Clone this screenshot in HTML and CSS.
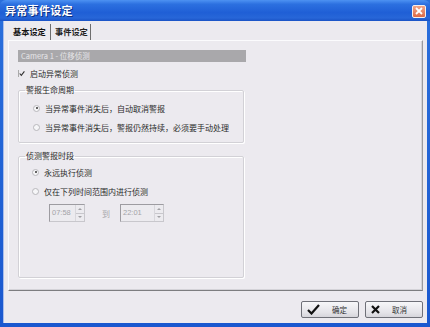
FILE: index.html
```html
<!DOCTYPE html>
<html lang="zh">
<head>
<meta charset="utf-8">
<link rel="stylesheet" href="styles.css">
</head>
<body>
<div class="window">
  <div class="titlebar">
    <span class="title">异常事件设定</span>
    <span class="close"><svg width="8" height="8" viewBox="0 0 8 8"><path d="M1 1L7 7M7 1L1 7" stroke="#fff" stroke-width="1.8"/></svg></span>
  </div>
  <div class="client">
    <div class="tabs">
      <span class="tab active">基本设定</span>
      <span class="tab">事件设定</span>
    </div>
    <div class="panel">
      <div class="graybar">Camera 1 - 位移侦测</div>
      <div class="row check-row">
        <span class="checkbox"><svg width="7" height="7" viewBox="0 0 7 7"><path d="M0.8 3.5L2.7 5.6L6.3 1" fill="none" stroke="#333" stroke-width="1.3"/></svg></span>
        <span>启动异常侦测</span>
      </div>
      <fieldset class="group g1">
        <legend>警报生命周期</legend>
        <div class="group-body">
          <div class="row radio-row"><span class="radio on"></span><span>当异常事件消失后，自动取消警报</span></div>
          <div class="row radio-row"><span class="radio"></span><span>当异常事件消失后，警报仍然持续，必须要手动处理</span></div>
        </div>
      </fieldset>
      <fieldset class="group g2">
        <legend>侦测警报时段</legend>
        <div class="group-body">
          <div class="row radio-row"><span class="radio on"></span><span>永远执行侦测</span></div>
          <div class="row radio-row"><span class="radio"></span><span>仅在下列时间范围内进行侦测</span></div>
          <div class="time-row">
            <div class="spinner s1"><span class="val">07:58</span><span class="arrows"><span class="up"></span><span class="down"></span></span></div>
            <span class="to">到</span>
            <div class="spinner s2"><span class="val">22:01</span><span class="arrows"><span class="up"></span><span class="down"></span></span></div>
          </div>
        </div>
      </fieldset>
    </div>
    <div class="buttons">
      <button class="btn"><svg width="13" height="11" viewBox="0 0 13 11"><path d="M1 6L4.5 9.5L12 1" fill="none" stroke="#111" stroke-width="2.2"/></svg><span>确定</span></button>
      <button class="btn"><svg width="9" height="9" viewBox="0 0 9 9"><path d="M1 1L8 8M8 1L1 8" stroke="#111" stroke-width="2.2"/></svg><span>取消</span></button>
    </div>
  </div>
</div>
</body>
</html>
```
FILE: styles.css
```css
* { box-sizing: border-box; }
html, body { margin: 0; padding: 0; }
body {
  width: 430px;
  height: 327px;
  overflow: hidden;
  font-family: "Noto Sans CJK SC", "Liberation Sans", sans-serif;
  font-size: 8px;
  color: #2a2a2a;
  background: #ECEAEF;
}
.window {
  width: 430px;
  height: 327px;
  display: flex;
  flex-direction: column;
  background: linear-gradient(#2a6fdc, #1a58cf);
  padding: 0 3px 4px 3px;
}
.titlebar {
  height: 21px;
  flex: none;
  display: flex;
  align-items: center;
  justify-content: space-between;
  margin: 0 -3px;
  padding: 0 3px 0 5px;
  background: linear-gradient(#4d92f2 0%, #2c70e0 20%, #1f5fd6 60%, #2766d8 85%, #1a53c6 100%);
  border-radius: 6px 6px 0 0;
}
.title {
  color: #fff;
  font-weight: bold;
  font-size: 11px;
  line-height: 13px;
  letter-spacing: 0.3px;
  text-shadow: 1px 1px 0 #0c2f80;
}
.close {
  width: 14px;
  height: 13px;
  margin-right: 1px;
  margin-top: 1px;
  display: flex;
  align-items: center;
  justify-content: center;
  background: linear-gradient(#f0a487, #dc6a48);
  border: 1px solid #f6f0ee;
  border-radius: 2px;
}
.client {
  flex: 1;
  background: #ECEAEF;
  padding: 0 4px 0 4px;
  display: flex;
  flex-direction: column;
  border-left: 1px solid #a9bdea;
}
.tabs {
  height: 19px;
  display: flex;
  align-items: flex-end;
}
.tab {
  height: 16px;
  line-height: 14px;
  white-space: nowrap;
  border-right: 1px solid #6e6e6e;
  font-size: 8.2px;
  font-weight: bold;
}
.tab.active {
  width: 43px;
  padding-left: 5px;
  color: #111;
}
.tab:nth-child(2) {
  width: 40px;
  padding-left: 4px;
  color: #222;
}
.panel {
  height: 251px;
  border: 1px solid #fbfbfd;
  border-right: 1px solid #9a9a9e;
  border-bottom: 1px solid #7d7d80;
  padding: 9px 0 0 9px;
  box-shadow: inset -1px -1px 0 #d4d3d8;
}
.graybar {
  width: 228px;
  height: 12px;
  line-height: 12px;
  background: #a9a8ab;
  color: #e6e6e8;
  padding-left: 3px;
  font-size: 7.5px;
  white-space: nowrap;
}
.row {
  height: 12px;
  display: flex;
  align-items: center;
  white-space: nowrap;
}
.check-row {
  margin-top: 5px;
  gap: 5px;
}
.checkbox {
  width: 7px;
  height: 7px;
  display: flex;
  align-items: center;
  justify-content: center;
  border-left: 1px solid #aaa;
}
.group {
  width: 226px;
  margin: 0;
  padding: 0;
  border: 1px solid #d2d1d6;
  box-shadow: inset 1px 1px 0 #fff, 1px 1px 0 #fff;
  border-radius: 2px;
}
.group legend {
  margin-left: 6px;
  padding: 0 1px;
  line-height: 10px;
  height: 10px;
  font-size: 8px;
}
.g1 { margin-top: 6px; }
.g2 { margin-top: 8px; }
.g1 .group-body { padding: 7px 0 9px 14px; display: flex; flex-direction: column; gap: 7px; }
.g2 .group-body { padding: 5px 0 55px 13px; display: flex; flex-direction: column; gap: 7px; }
.radio-row { gap: 5px; }
.radio {
  width: 7px;
  height: 7px;
  border-radius: 50%;
  border: 1px solid #b8b8bc;
  background: #f6f6f8;
  position: relative;
}
.radio.on::after {
  content: "";
  position: absolute;
  left: 1.5px;
  top: 1.5px;
  width: 2px;
  height: 2px;
  border-radius: 50%;
  background: #333;
}
.time-row {
  height: 18px;
  display: flex;
  align-items: center;
  padding-left: 17px;
}
.spinner {
  height: 18px;
  display: flex;
  border: 1px solid #c8c7cc;
  border-left-color: #9d9ca1;
  border-top-color: #9d9ca1;
  background: #ecebef;
}
.s1 { width: 36px; }
.s2 { width: 44px; }
.val {
  flex: 1;
  color: #a4a4a8;
  font-size: 7.5px;
  line-height: 16px;
  padding-left: 2px;
  font-family: "Liberation Sans", sans-serif;
}
.arrows {
  width: 9px;
  display: flex;
  flex-direction: column;
  border-left: 1px solid #d8d7dc;
}
.arrows span {
  flex: 1;
  display: flex;
  align-items: center;
  justify-content: center;
}
.arrows .up { border-bottom: 1px solid #c8c7cc; }
.arrows .up::before {
  content: "";
  border: 2px solid transparent;
  border-bottom: 2px solid #a0a0a4;
  border-top: 0;
}
.arrows .down::before {
  content: "";
  border: 2px solid transparent;
  border-top: 2px solid #a0a0a4;
  border-bottom: 0;
}
.to {
  color: #a8a8ac;
  margin: 0 10px 0 17px;
  font-size: 8px;
}
.buttons {
  display: flex;
  justify-content: flex-end;
  gap: 6px;
  padding-top: 10px;
  padding-right: 0px;
}
.btn {
  width: 58px;
  height: 17px;
  margin: 0;
  padding: 0 0 0 5px;
  display: flex;
  align-items: center;
  gap: 8px;
  font-family: "Noto Sans CJK SC", sans-serif;
  font-size: 7.5px;
  color: #333;
  background: linear-gradient(#f7f7f9, #e4e3e8 70%, #d6d5db);
  border: 1px solid #6f7078;
  border-radius: 2px;
}
.btn span { margin-left: 4px; }
```
